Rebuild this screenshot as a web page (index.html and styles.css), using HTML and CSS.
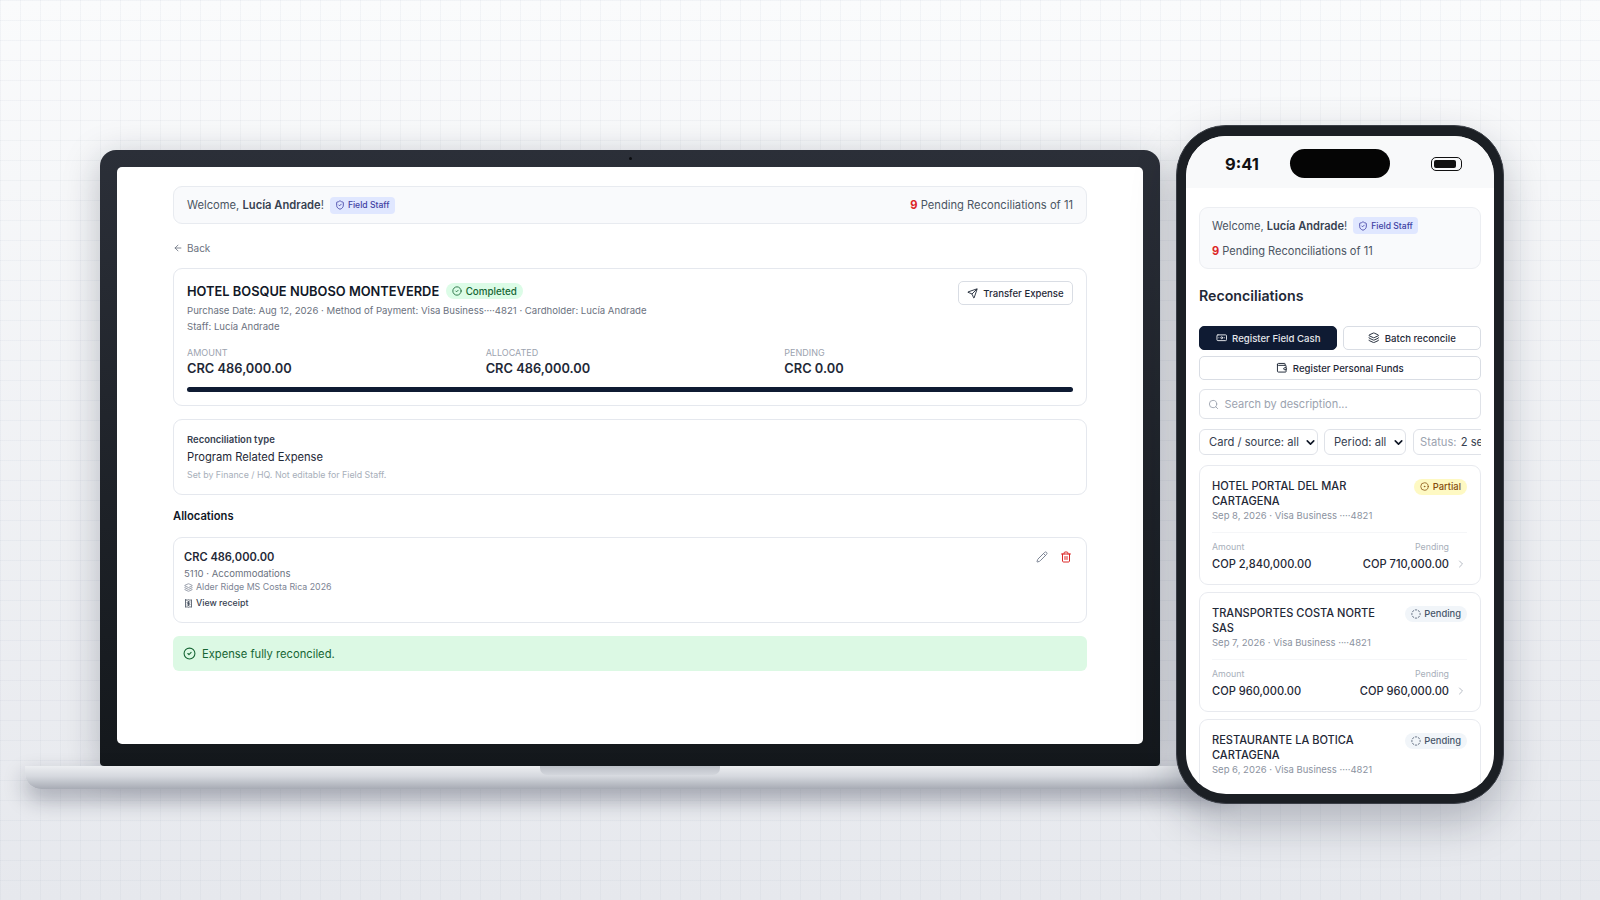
FILE: index.html
```html
<!DOCTYPE html>
<html>
<head>
    <title>Reconciliations</title>
    <link rel="stylesheet" href="styles.css">
</head>
<body>
    <!-- icon sprite -->
    <svg class="sprite" xmlns="http://www.w3.org/2000/svg">
        <symbol id="i-shield" viewBox="0 0 24 24"><path d="M20 13c0 5-3.5 7.5-7.66 8.95a1 1 0 0 1-.67-.01C7.5 20.5 4 18 4 13V6a1 1 0 0 1 1-1c2 0 4.5-1.2 6.24-2.72a1.17 1.17 0 0 1 1.52 0C14.51 3.81 17 5 19 5a1 1 0 0 1 1 1z"/><path d="m9 12 2 2 4-4"/></symbol>
        <symbol id="i-back" viewBox="0 0 24 24"><path d="m12 19-7-7 7-7"/><path d="M19 12H5"/></symbol>
        <symbol id="i-check" viewBox="0 0 24 24"><circle cx="12" cy="12" r="10"/><path d="m9 12 2 2 4-4"/></symbol>
        <symbol id="i-send" viewBox="0 0 24 24"><path d="M14.536 21.686a.5.5 0 0 0 .937-.024l6.5-19a.496.496 0 0 0-.635-.635l-19 6.5a.5.5 0 0 0-.024.937l7.93 3.18a2 2 0 0 1 1.112 1.11z"/><path d="m21.854 2.147-10.94 10.939"/></symbol>
        <symbol id="i-layers" viewBox="0 0 24 24"><path d="M12.83 2.18a2 2 0 0 0-1.66 0L2.6 6.08a1 1 0 0 0 0 1.83l8.58 3.91a2 2 0 0 0 1.66 0l8.58-3.9a1 1 0 0 0 0-1.83z"/><path d="M2 12a1 1 0 0 0 .58.91l8.6 3.91a2 2 0 0 0 1.65 0l8.58-3.9A1 1 0 0 0 22 12"/><path d="M2 17a1 1 0 0 0 .58.91l8.6 3.91a2 2 0 0 0 1.65 0l8.58-3.9A1 1 0 0 0 22 17"/></symbol>
        <symbol id="i-receipt" viewBox="0 0 24 24"><path d="M4 2v20l2-1 2 1 2-1 2 1 2-1 2 1 2-1 2 1V2l-2 1-2-1-2 1-2-1-2 1-2-1-2 1Z"/><path d="M16 8h-6a2 2 0 1 0 0 4h4a2 2 0 1 1 0 4H8"/><path d="M12 17.5v-11"/></symbol>
        <symbol id="i-pencil" viewBox="0 0 24 24"><path d="M21.174 6.812a1 1 0 0 0-3.986-3.987L3.842 16.174a2 2 0 0 0-.5.83l-1.321 4.352a.5.5 0 0 0 .623.622l4.353-1.32a2 2 0 0 0 .83-.497z"/><path d="m15 5 4 4"/></symbol>
        <symbol id="i-trash" viewBox="0 0 24 24"><path d="M3 6h18"/><path d="M19 6v14c0 1-1 2-2 2H7c-1 0-2-1-2-2V6"/><path d="M8 6V4c0-1 1-2 2-2h4c1 0 2 1 2 2v2"/><path d="M10 11v6"/><path d="M14 11v6"/></symbol>
        <symbol id="i-cash" viewBox="0 0 24 24"><rect width="20" height="12" x="2" y="6" rx="2"/><circle cx="12" cy="12" r="2"/><path d="M6 12h.01M18 12h.01"/></symbol>
        <symbol id="i-wallet" viewBox="0 0 24 24"><path d="M19 7V4a1 1 0 0 0-1-1H5a2 2 0 0 0 0 4h15a1 1 0 0 1 1 1v4h-3a2 2 0 0 0 0 4h3a1 1 0 0 0 1-1v-2a1 1 0 0 0-1-1"/><path d="M3 5v14a2 2 0 0 0 2 2h15a1 1 0 0 0 1-1v-4"/></symbol>
        <symbol id="i-search" viewBox="0 0 24 24"><path d="m21 21-4.34-4.34"/><circle cx="11" cy="11" r="8"/></symbol>
        <symbol id="i-chevron" viewBox="0 0 24 24"><path d="m9 18 6-6-6-6"/></symbol>
        <symbol id="i-dot" viewBox="0 0 24 24"><circle cx="12" cy="12" r="10"/><circle cx="12" cy="12" r="1"/></symbol>
        <symbol id="i-dashed" viewBox="0 0 24 24"><path d="M10.1 2.182a10 10 0 0 1 3.8 0"/><path d="M13.9 21.818a10 10 0 0 1-3.8 0"/><path d="M17.609 3.721a10 10 0 0 1 2.69 2.7"/><path d="M2.182 13.9a10 10 0 0 1 0-3.8"/><path d="M20.279 17.609a10 10 0 0 1-2.7 2.69"/><path d="M21.818 10.1a10 10 0 0 1 0 3.8"/><path d="M3.721 6.391a10 10 0 0 1 2.7-2.69"/><path d="M6.391 20.279a10 10 0 0 1-2.69-2.7"/></symbol>
    </svg>

    <div class="stage">
        <!-- laptop -->
        <div class="laptop">
            <div class="lid">
                <span class="camera"></span>
                <div class="laptop-screen">
                    <div class="welcome-bar">
                        <div class="welcome">
                            <span>Welcome, <b>Lucía Andrade</b>!</span>
                            <span class="role"><svg class="icon"><use href="#i-shield"/></svg>Field Staff</span>
                        </div>
                        <div class="pending-count"><b>9</b> Pending Reconciliations of 11</div>
                    </div>

                    <a class="back"><svg class="icon"><use href="#i-back"/></svg>Back</a>

                    <div class="card expense">
                        <div class="expense-head">
                            <div>
                                <div class="expense-title">
                                    <h2>HOTEL BOSQUE NUBOSO MONTEVERDE</h2>
                                    <span class="badge badge-done"><svg class="icon"><use href="#i-check"/></svg>Completed</span>
                                </div>
                                <p class="expense-meta">Purchase Date: Aug 12, 2026 · Method of Payment: Visa Business····4821 · Cardholder: Lucía Andrade</p>
                                <p class="expense-meta">Staff: Lucía Andrade</p>
                            </div>
                            <button class="btn transfer"><svg class="icon"><use href="#i-send"/></svg>Transfer Expense</button>
                        </div>
                        <div class="stats">
                            <div><div class="stat-label">AMOUNT</div><div class="stat-value">CRC 486,000.00</div></div>
                            <div><div class="stat-label">ALLOCATED</div><div class="stat-value">CRC 486,000.00</div></div>
                            <div><div class="stat-label">PENDING</div><div class="stat-value">CRC 0.00</div></div>
                        </div>
                        <div class="progress"></div>
                    </div>

                    <div class="card recon-type">
                        <div class="recon-label">Reconciliation type</div>
                        <div class="recon-value">Program Related Expense</div>
                        <div class="recon-note">Set by Finance / HQ. Not editable for Field Staff.</div>
                    </div>

                    <h3 class="alloc-heading">Allocations</h3>

                    <div class="card allocation">
                        <div>
                            <div class="alloc-amount">CRC 486,000.00</div>
                            <div class="alloc-account">5110 · Accommodations</div>
                            <div class="alloc-project"><svg class="icon"><use href="#i-layers"/></svg>Alder Ridge MS Costa Rica 2026</div>
                            <div class="alloc-receipt"><svg class="icon"><use href="#i-receipt"/></svg>View receipt</div>
                        </div>
                        <div class="alloc-actions">
                            <svg class="icon icon-edit"><use href="#i-pencil"/></svg>
                            <svg class="icon icon-delete"><use href="#i-trash"/></svg>
                        </div>
                    </div>

                    <div class="success"><svg class="icon"><use href="#i-check"/></svg>Expense fully reconciled.</div>
                </div>
            </div>
            <div class="base"><span class="base-notch"></span></div>
        </div>

        <!-- phone -->
        <div class="phone">
            <div class="phone-screen">
                <div class="status-bar">
                    <span class="time">9:41</span>
                    <span class="island"></span>
                    <span class="battery"><i></i></span>
                </div>
                <div class="phone-content">
                    <div class="welcome-card">
                        <div class="welcome">
                            <span>Welcome, <b>Lucía Andrade</b>!</span>
                            <span class="role"><svg class="icon"><use href="#i-shield"/></svg>Field Staff</span>
                        </div>
                        <div class="pending-count"><b>9</b> Pending Reconciliations of 11</div>
                    </div>

                    <h2 class="phone-title">Reconciliations</h2>

                    <div class="actions">
                        <button class="btn btn-dark"><svg class="icon"><use href="#i-cash"/></svg>Register Field Cash</button>
                        <button class="btn"><svg class="icon"><use href="#i-layers"/></svg>Batch reconcile</button>
                        <button class="btn btn-wide"><svg class="icon"><use href="#i-wallet"/></svg>Register Personal Funds</button>
                    </div>

                    <div class="search"><svg class="icon"><use href="#i-search"/></svg>Search by description...</div>

                    <div class="filters">
                        <select class="filter filter-card"><option>Card / source: all</option></select>
                        <select class="filter filter-period"><option>Period: all</option></select>
                        <div class="filter filter-status"><span>Status:</span> 2 selected</div>
                    </div>

                    <div class="rec-list">
                        <div class="rec">
                            <div class="rec-head">
                                <div>
                                    <div class="rec-name">HOTEL PORTAL DEL MAR CARTAGENA</div>
                                    <div class="rec-meta">Sep 8, 2026 · Visa Business ····4821</div>
                                </div>
                                <span class="badge badge-partial"><svg class="icon"><use href="#i-dot"/></svg>Partial</span>
                            </div>
                            <div class="rec-foot">
                                <div><div class="rec-label">Amount</div><div class="rec-amount">COP 2,840,000.00</div></div>
                                <div class="rec-right">
                                    <div><div class="rec-label">Pending</div><div class="rec-amount">COP 710,000.00</div></div>
                                    <svg class="icon"><use href="#i-chevron"/></svg>
                                </div>
                            </div>
                        </div>

                        <div class="rec">
                            <div class="rec-head">
                                <div>
                                    <div class="rec-name">TRANSPORTES COSTA NORTE SAS</div>
                                    <div class="rec-meta">Sep 7, 2026 · Visa Business ····4821</div>
                                </div>
                                <span class="badge badge-pending"><svg class="icon"><use href="#i-dashed"/></svg>Pending</span>
                            </div>
                            <div class="rec-foot">
                                <div><div class="rec-label">Amount</div><div class="rec-amount">COP 960,000.00</div></div>
                                <div class="rec-right">
                                    <div><div class="rec-label">Pending</div><div class="rec-amount">COP 960,000.00</div></div>
                                    <svg class="icon"><use href="#i-chevron"/></svg>
                                </div>
                            </div>
                        </div>

                        <div class="rec">
                            <div class="rec-head">
                                <div>
                                    <div class="rec-name">RESTAURANTE LA BOTICA CARTAGENA</div>
                                    <div class="rec-meta">Sep 6, 2026 · Visa Business ····4821</div>
                                </div>
                                <span class="badge badge-pending"><svg class="icon"><use href="#i-dashed"/></svg>Pending</span>
                            </div>
                        </div>
                    </div>
                </div>
            </div>
        </div>
    </div>
</body>
</html>
```

FILE: styles.css
```css
* { box-sizing: border-box; }

html, body { margin: 0; height: 100%; }

body {
    font-family: Inter, "Noto Sans", sans-serif;
    color: #111827;
    overflow: hidden;
    background:
        linear-gradient(to right, rgba(148, 163, 184, 0.08) 1px, transparent 1px) 0 0 / 20px 20px,
        linear-gradient(to bottom, rgba(148, 163, 184, 0.08) 1px, transparent 1px) 0 0 / 20px 20px,
        linear-gradient(to bottom, #fafbfc, #e6e8ed);
}

h2, h3, p { margin: 0; }

.sprite { display: none; }

.icon {
    width: 10px;
    height: 10px;
    flex: none;
    fill: none;
    stroke: currentColor;
    stroke-width: 2;
    stroke-linecap: round;
    stroke-linejoin: round;
}

.stage {
    display: flex;
    align-items: flex-start;
    gap: 16px;
    padding: 125px 0 0 100px;
}

/* laptop */
.laptop { width: 1060px; margin-top: 25px; flex: none; }

.lid {
    position: relative;
    height: 616px;
    padding: 17px 17px 22px;
    background: linear-gradient(to bottom, #2b2f38, #14181c);
    border-radius: 16px 16px 4px 4px;
    box-shadow: 0 8px 36px rgba(15, 23, 42, 0.26);
}

.camera {
    position: absolute;
    top: 7px;
    left: 529px;
    width: 3px;
    height: 3px;
    border-radius: 50%;
    background: #0b0d10;
}

.laptop-screen {
    height: 577px;
    padding: 19px 56px 0;
    background: #fff;
    border-radius: 5px;
}

.base {
    position: relative;
    height: 23px;
    margin: 0 -75px;
    background: linear-gradient(to bottom, #eceef1, #d5d8de 45%, #a7abb4);
    border-radius: 0 0 16px 16px;
    box-shadow: 0 10px 22px rgba(15, 23, 42, 0.32);
}

.base-notch {
    position: absolute;
    top: 0;
    left: 515px;
    width: 180px;
    height: 9px;
    background: linear-gradient(to bottom, #bcc0c8, #d3d6dc);
    border-radius: 0 0 7px 7px;
}

.welcome-bar {
    display: flex;
    justify-content: space-between;
    align-items: center;
    height: 38px;
    padding: 0 13px;
    background: #f9fafc;
    border: 1px solid #e8ebf0;
    border-radius: 9px;
    font-size: 11.2px;
    color: #4b5563;
}

.welcome { display: flex; align-items: center; gap: 6px; }

.welcome b { font-weight: 600; color: #374151; }

.role {
    display: inline-flex;
    align-items: center;
    gap: 3px;
    height: 17px;
    padding: 0 5px;
    background: #e0e7ff;
    border-radius: 4px;
    font-size: 8.6px;
    font-weight: 500;
    color: #3f3fa3;
}

.pending-count b { font-weight: 700; color: #dc2626; }

.back {
    display: flex;
    align-items: center;
    gap: 4px;
    height: 14px;
    margin: 17px 0 13px;
    font-size: 10px;
    color: #6b7280;
}

.card {
    background: #fff;
    border: 1px solid #e5e8ee;
    border-radius: 9px;
}

.expense { padding: 11px 13px 13px; margin-bottom: 13px; }

.expense-head { display: flex; justify-content: space-between; align-items: flex-start; }

.expense-title { display: flex; align-items: center; gap: 7px; height: 22px; margin-bottom: 1px; }

.expense-title h2 { font-size: 12.85px; font-weight: 600; color: #111827; }

.badge {
    display: inline-flex;
    align-items: center;
    gap: 3.5px;
    height: 16px;
    padding: 0 6px;
    border-radius: 8px;
    font-size: 9.4px;
    font-weight: 500;
    white-space: nowrap;
}

.badge .icon { width: 9px; height: 9px; }

.badge-done { background: #dcfce7; color: #166534; font-size: 9.8px; }
.badge-done .icon { width: 10px; height: 10px; }
.badge-partial { background: #fef9c3; color: #854d0e; }
.badge-pending { background: #f1f5f9; color: #475569; }

.expense-meta { font-size: 9.6px; line-height: 16px; color: #6b7280; }

.btn {
    display: inline-flex;
    align-items: center;
    justify-content: center;
    gap: 5px;
    height: 24px;
    padding: 0;
    background: #fff;
    border: 1px solid #d9dde4;
    border-radius: 5px;
    font-family: inherit;
    font-size: 9.6px;
    font-weight: 500;
    color: #1f2937;
}

.transfer { width: 115px; margin-top: 1px; }

.transfer .icon { width: 11px; height: 11px; }

.stats {
    display: grid;
    grid-template-columns: repeat(3, 1fr);
    gap: 10px;
    margin-top: 12px;
}

.stat-label { font-size: 9px; line-height: 12px; color: #9ca3af; }

.stat-value {
    margin-top: 1px;
    font-size: 12.85px;
    line-height: 18px;
    font-weight: 600;
    color: #1f2937;
}

.progress {
    height: 5px;
    margin-top: 9px;
    background: #0f1b33;
    border-radius: 3px;
}

.recon-type { padding: 13px 13px 13px; margin-bottom: 14px; }

.recon-label { font-size: 9.5px; line-height: 14px; font-weight: 600; color: #374151; }

.recon-value { margin-top: 1px; font-size: 11.2px; line-height: 18px; color: #1f2937; }

.recon-note { margin-top: 3px; font-size: 8.83px; line-height: 12px; color: #a8afba; }

.alloc-heading {
    height: 14px;
    margin-bottom: 14px;
    font-size: 11.2px;
    line-height: 14px;
    font-weight: 600;
    color: #111827;
}

.allocation {
    display: flex;
    justify-content: space-between;
    padding: 11px 14px 12px 10px;
    margin-bottom: 13px;
}

.alloc-amount { font-size: 11.1px; line-height: 16px; font-weight: 600; color: #1f2937; }

.alloc-account { margin-top: 2px; font-size: 9.55px; line-height: 14px; color: #6b7280; }

.alloc-project {
    display: flex;
    align-items: center;
    gap: 3px;
    font-size: 8.8px;
    line-height: 12px;
    color: #7c8494;
}

.alloc-project .icon, .alloc-receipt .icon { width: 9px; height: 9px; }

.alloc-receipt {
    display: flex;
    align-items: center;
    gap: 3px;
    margin-top: 3px;
    font-size: 8.8px;
    line-height: 14px;
    font-weight: 500;
    color: #374151;
}

.alloc-actions { display: flex; gap: 12px; padding-top: 2px; }

.alloc-actions .icon { width: 12px; height: 12px; }

.icon-edit { color: #7c8494; }
.icon-delete { color: #dc2626; }

.success {
    display: flex;
    align-items: center;
    gap: 6px;
    height: 35px;
    padding: 0 10px;
    background: #dcf9e4;
    border-radius: 6px;
    font-size: 11.2px;
    color: #166534;
}

.success .icon { width: 13px; height: 13px; }

/* phone */
.phone {
    position: relative;
    z-index: 1;
    flex: none;
    width: 328px;
    height: 679px;
    padding: 10px 9px 9px;
    background: #1b1f24;
    border: 1px solid #3b3f47;
    border-radius: 50px;
    box-shadow: 0 18px 44px rgba(15, 23, 42, 0.26);
}

.phone-screen {
    height: 100%;
    background: #fff;
    border-radius: 40px;
    overflow: hidden;
}

.status-bar {
    display: grid;
    grid-template-columns: 1fr 100px 1fr;
    align-items: center;
    height: 52px;
    padding-top: 4px;
    background: #f8f9fa;
}

.time { padding-left: 39px; font-size: 16.5px; font-weight: 700; color: #111; }

.island { height: 29px; margin-top: -2px; background: #050505; border-radius: 15px; }

.battery {
    justify-self: end;
    width: 31px;
    height: 14px;
    margin-right: 32px;
    padding: 2px;
    border: 1.5px solid #111;
    border-radius: 5px;
}

.battery i { display: block; width: 22px; height: 100%; background: #111; border-radius: 2px; }

.phone-content { padding: 19px 13px 0; }

.welcome-card {
    height: 62px;
    padding: 9px 12px;
    background: #f9fafc;
    border: 1px solid #eceef2;
    border-radius: 9px;
    font-size: 11.05px;
    color: #4b5563;
}

.welcome-card .pending-count { margin-top: 9px; line-height: 16px; }

.phone-title {
    margin: 17px 0 20px;
    font-size: 14.2px;
    line-height: 20px;
    font-weight: 600;
    color: #1f2937;
}

.actions { display: grid; grid-template-columns: 1fr 1fr; gap: 6px; }

.btn-wide { grid-column: 1 / -1; }

.btn-dark { background: #0f1b33; border-color: #0f1b33; color: #e5e7eb; }

.actions .icon { width: 11.5px; height: 11.5px; }

.search {
    display: flex;
    align-items: center;
    gap: 5.5px;
    height: 30px;
    margin-top: 9px;
    padding: 0 8px;
    border: 1px solid #dfe2e8;
    border-radius: 6px;
    font-size: 11px;
    color: #9ca3af;
}

.search .icon { width: 11px; height: 11px; color: #9ca3af; }

.filters { display: flex; gap: 6px; margin-top: 10px; overflow: hidden; }

.filter {
    flex: none;
    height: 26px;
    padding: 0 9px;
    background: #fff;
    border: 1px solid #dfe2e8;
    border-radius: 6px;
    font-family: inherit;
    font-size: 11.2px;
    color: #374151;
}

select.filter {
    appearance: none;
    background: #fff url("data:image/svg+xml,%3Csvg xmlns='http://www.w3.org/2000/svg' viewBox='0 0 24 24' fill='none' stroke='%23111827' stroke-width='3' stroke-linecap='round' stroke-linejoin='round'%3E%3Cpath d='m6 9 6 6 6-6'/%3E%3C/svg%3E") no-repeat right 0 center / 13px 13px;
}

.filter-card { width: 119px; }
.filter-period { width: 82px; }

.filter-status {
    margin-left: 1px;
    padding: 0 6px;
    line-height: 24px;
    white-space: nowrap;
}

.filter-status span { margin-right: 1px; color: #9ca3af; }

.rec-list { display: flex; flex-direction: column; gap: 7.5px; margin-top: 10px; }

.rec {
    height: 119.5px;
    padding: 13px 13px 0 12px;
    border: 1px solid #e8eaef;
    border-radius: 9px;
}

.rec-head { display: flex; justify-content: space-between; align-items: flex-start; gap: 14px; }

.rec-head .badge { margin-top: -0.5px; }

.badge-pending .icon { width: 10px; height: 10px; stroke-width: 1.8; }

.rec-name { font-size: 11.05px; line-height: 14.5px; font-weight: 500; color: #1f2937; }

.rec-meta { margin-top: 1px; font-size: 9.5px; line-height: 14px; color: #8b92a0; }

.rec-foot {
    display: flex;
    justify-content: space-between;
    align-items: flex-end;
    margin-top: 8.5px;
    padding-top: 8px;
    border-top: 1px solid #f5f6f8;
}

.rec-label { font-size: 8.8px; line-height: 12px; color: #a8afba; }

.rec-amount {
    margin-top: 3px;
    font-size: 11.1px;
    line-height: 16px;
    font-weight: 500;
    color: #1f2937;
}

.rec-right { display: flex; align-items: flex-end; gap: 6px; text-align: right; }

.rec-right .icon { width: 12px; height: 12px; margin-bottom: 2px; color: #b6bbc4; }
```
